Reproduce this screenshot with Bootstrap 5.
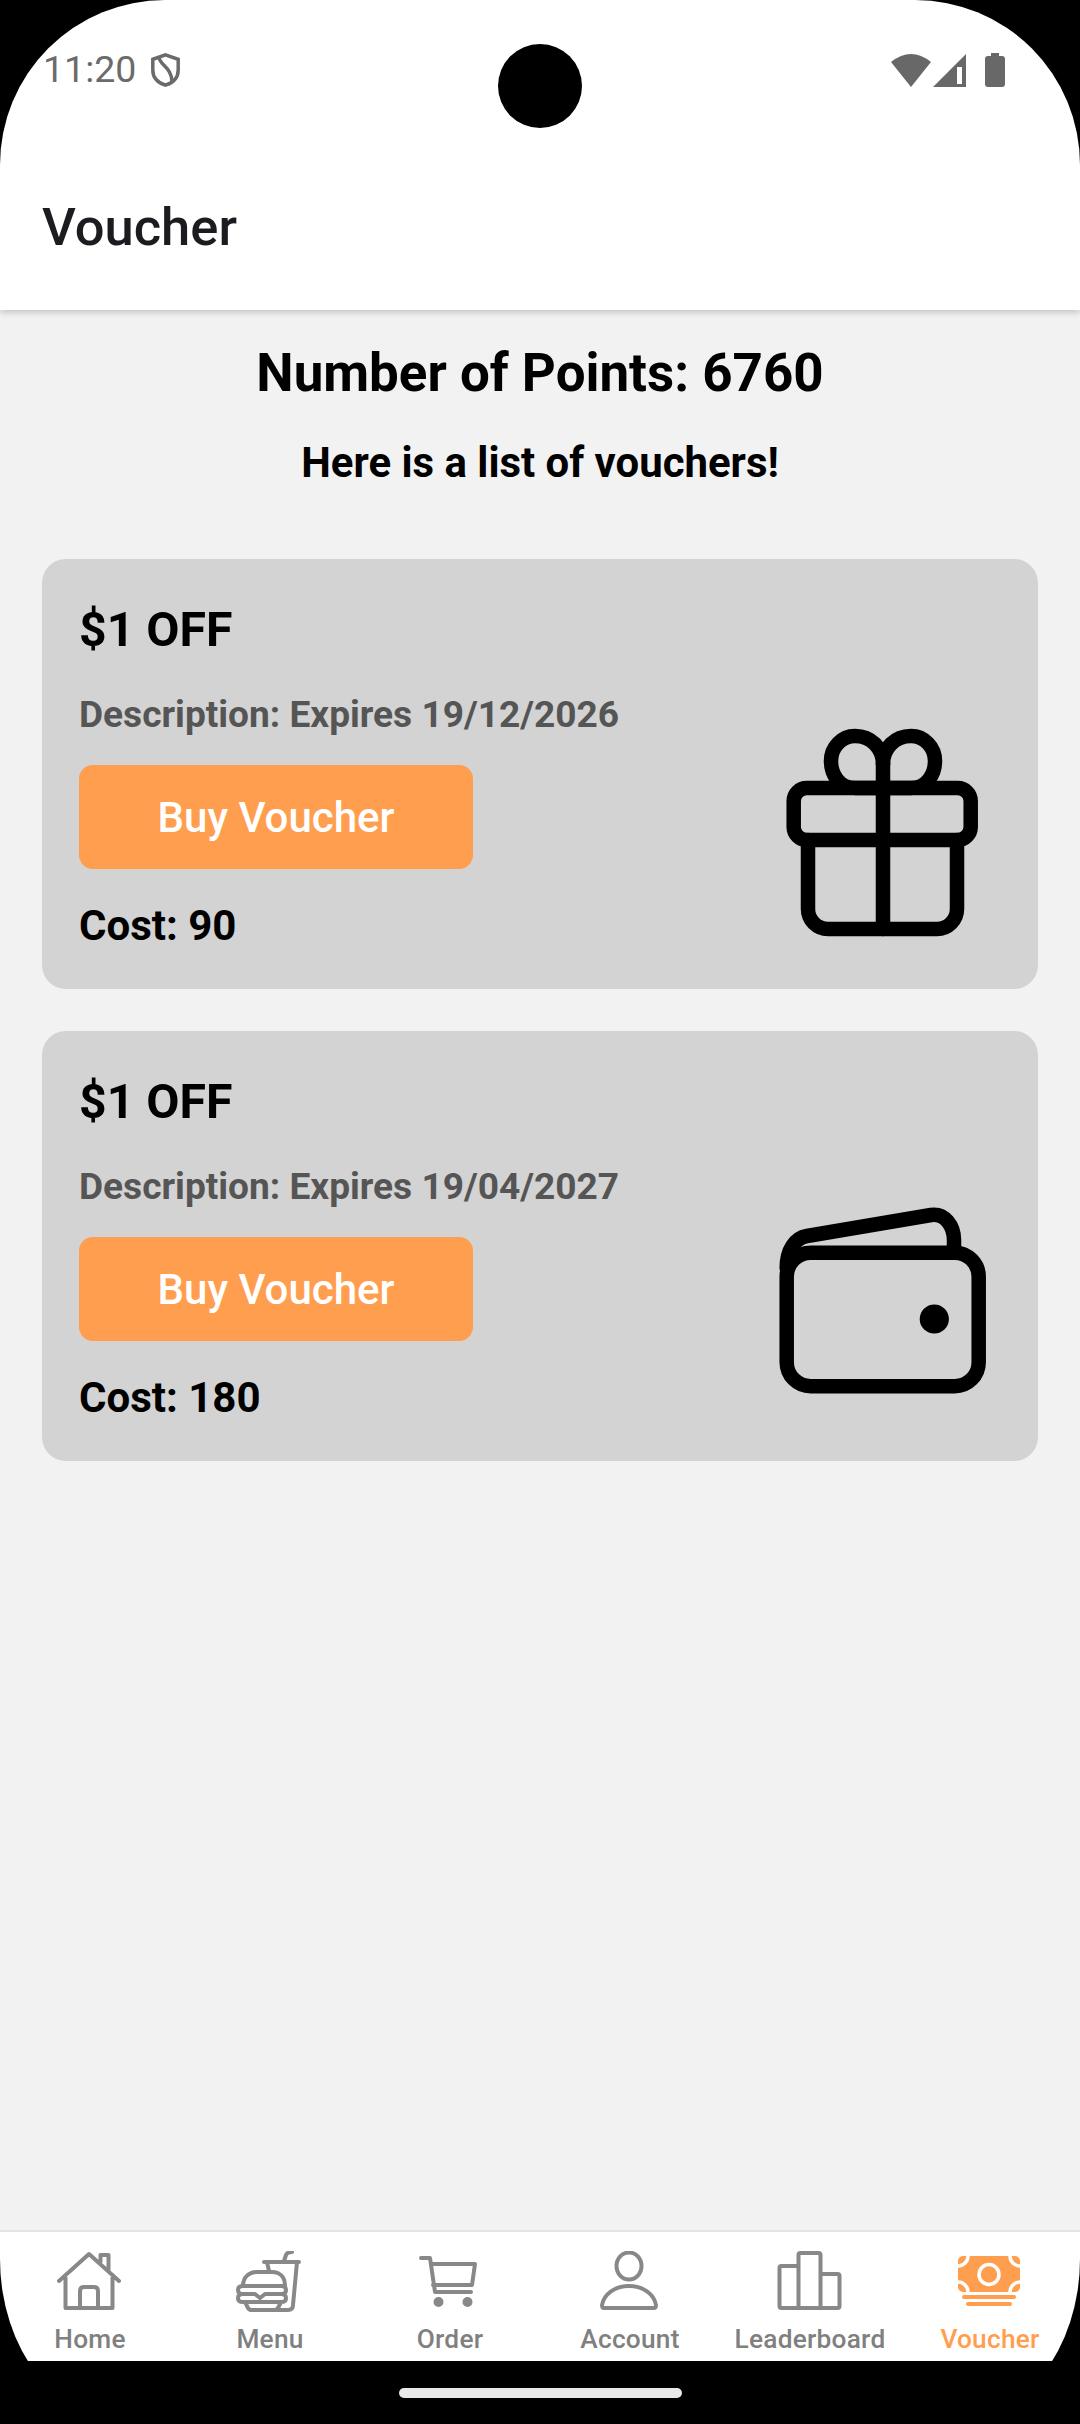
<!DOCTYPE html>
<html lang="en">
<head>
    <meta charset="UTF-8">
    <meta name="viewport" content="width=device-width, initial-scale=1.0">
    <title>Voucher</title>
    <link href="https://cdn.jsdelivr.net/npm/bootstrap@5.3.0/dist/css/bootstrap.min.css" rel="stylesheet">
    <style>
        html, body {
            margin: 0;
            background: #000;
        }

        body {
            font-family: Roboto, "Liberation Sans", sans-serif;
        }

        .phone-screen {
            width: 1080px;
            height: 2424px;
            background: #000;
            border-radius: 165px 165px 130px 130px / 165px;
            overflow: hidden;
            position: relative;
        }

        .camera-hole {
            position: absolute;
            left: 498px;
            top: 44px;
            width: 84px;
            height: 84px;
            border-radius: 50%;
            background: #000;
        }

        .app-header {
            background: #fff;
            height: 310px;
            box-shadow: 0 2px 7px rgba(0, 0, 0, .22);
            position: relative;
        }

        .status-row {
            height: 140px;
            padding: 0 75px 0 43px;
            color: #6b6b6b;
        }

        .status-time {
            font-size: 37.5px;
            line-height: 1;
            margin-right: 15px;
        }

        .signal-icon {
            margin-left: 2px;
        }

        .battery-icon {
            margin-left: 19px;
        }

        .app-title {
            font-size: 52.5px;
            font-weight: 500;
            line-height: 60px;
            color: #1c1b1f;
            margin: 57px 0 0 42px;
        }

        .page-body {
            background: #f2f2f2;
        }

        .points-title {
            font-size: 52.9px;
            font-weight: 700;
            line-height: 70px;
            color: #000;
            margin: 28px 0 0;
        }

        .list-title {
            font-size: 41.9px;
            font-weight: 700;
            line-height: 50px;
            color: #000;
            margin: 30px 0 71px;
        }

        .voucher-card {
            background: #d3d3d3;
            border-radius: 24px;
            margin: 0 42px 42px;
            height: 430px;
            padding: 37px 35px 0 37px;
        }

        .voucher-name {
            font-size: 48.2px;
            font-weight: 700;
            line-height: 68px;
            color: #000;
            margin: 0;
        }

        .voucher-desc {
            font-size: 37.1px;
            font-weight: 700;
            line-height: 48px;
            color: #555;
            margin: 27px 0 26px;
        }

        .buy-btn {
            display: block;
            width: 394px;
            height: 104px;
            background: #ff9e4f;
            border: 0;
            border-radius: 14px;
            color: #fff;
            font-size: 42px;
            font-weight: 500;
            line-height: 1;
            padding: 2px 0 0;
        }

        .voucher-cost {
            font-size: 42px;
            font-weight: 700;
            line-height: 48px;
            color: #000;
            margin: 33px 0 0;
        }

        .voucher-art {
            width: 240px;
            height: 240px;
            align-self: flex-end;
            margin-bottom: 37px;
        }

        .tab-strip {
            height: 131px;
            background: #fff;
            border-top: 2px solid #e4e4e4;
        }

        .tab-item {
            width: 180px;
            color: #808080;
            font-size: 26.25px;
            font-weight: 500;
            line-height: 30px;
            padding-top: 19px;
            letter-spacing: .25px;
        }

        .tab-item svg {
            display: block;
            margin: 0 auto 11px;
            width: 70px;
            height: 62px;
            fill: none;
            stroke: #888;
            stroke-width: 4;
            stroke-linecap: round;
            stroke-linejoin: round;
        }

        .tab-item.tab-active {
            color: #ff9e4f;
        }

        .tab-item.tab-active svg {
            stroke: none;
        }

        .gesture-zone {
            height: 63px;
            background: #000;
            padding-top: 27px;
        }

        .gesture-pill {
            width: 283px;
            height: 10px;
            border-radius: 5px;
            background: #e8e8e8;
        }
    </style>
</head>
<body>
    <div class="phone-screen d-flex flex-column">
        <header class="app-header flex-shrink-0">
            <div class="status-row d-flex align-items-center">
                <span class="status-time">11:20</span>
                <svg width="29" height="34" viewBox="0 0 29 34" fill="none" stroke="#6b6b6b" stroke-width="3.5">
                    <path d="M14.5 1.800l12.700 4.500v10.700c0 7.500-5 12.800-12.700 15.200C6.800 29.800 1.800 24.500 1.800 17V6.300z"/>
                    <path d="M8 4c0 8 13 10 13 25"/>
                </svg>
                <svg class="ms-auto" width="40" height="33" viewBox="0 0 40 33" fill="#686868">
                    <path d="M20 33L0 8Q20-8 40 8z"/>
                </svg>
                <svg class="signal-icon" width="33" height="33" viewBox="0 0 33 33" fill="#686868" fill-rule="evenodd">
                    <path d="M0 33L33 0v33zM24 13v17h5V13z"/>
                </svg>
                <svg class="battery-icon" width="20" height="34" viewBox="0 0 20 34" fill="#686868">
                    <path d="M6 0h8v3h3a3 3 0 0 1 3 3v25a3 3 0 0 1-3 3H3a3 3 0 0 1-3-3V6a3 3 0 0 1 3-3h3z"/>
                </svg>
            </div>
            <h1 class="app-title">Voucher</h1>
        </header>
        <div class="camera-hole"></div>

        <main class="page-body flex-grow-1">
            <h2 class="points-title text-center">Number of Points: 6760</h2>
            <h3 class="list-title text-center">Here is a list of vouchers!</h3>

            <div class="voucher-card d-flex justify-content-between">
                <div>
                    <h4 class="voucher-name">$1 OFF</h4>
                    <p class="voucher-desc">Description: Expires 19/12/2026</p>
                    <button type="button" class="btn buy-btn">Buy Voucher</button>
                    <p class="voucher-cost">Cost: 90</p>
                </div>
                <svg class="voucher-art" viewBox="0 0 240 240" fill="none" stroke="#000" stroke-width="14.500" stroke-linecap="round" stroke-linejoin="round">
                    <rect x="30.700" y="76" width="177" height="52" rx="13"/>
                    <path d="M45 128v69a20 20 0 0 0 20 20h109a20 20 0 0 0 20-20v-69"/>
                    <path d="M120 52v165"/>
                    <path d="M120 76H92C76 76 68 62 68 49 68 35 79 24 92 24c16 0 28 12 28 28"/>
                    <path d="M120 76h28c16 0 24-14 24-27 0-14-11-25-24-25-16 0-28 12-28 28"/>
                </svg>
            </div>

            <div class="voucher-card d-flex justify-content-between">
                <div>
                    <h4 class="voucher-name">$1 OFF</h4>
                    <p class="voucher-desc">Description: Expires 19/04/2027</p>
                    <button type="button" class="btn buy-btn">Buy Voucher</button>
                    <p class="voucher-cost">Cost: 180</p>
                </div>
                <svg class="voucher-art" viewBox="0 0 240 240" fill="none" stroke="#000" stroke-width="14.500" stroke-linecap="round" stroke-linejoin="round">
                    <rect x="23.700" y="68.700" width="192" height="133.500" rx="24"/>
                    <path d="M23.700 84C23.700 66 32 54 44 52L168 31c14-2 23 11 23 25v12"/>
                    <circle cx="171.300" cy="135" r="14.600" fill="#000" stroke="none"/>
                </svg>
            </div>
        </main>

        <nav class="tab-strip d-flex flex-shrink-0">
            <div class="tab-item text-center">
                <svg viewBox="55 2252 70 62">
                    <path d="M59 2282l30-27 30 27M65.500 2276v33h47v-33M80 2309v-17q0-4 4-4h10q4 0 4 4v17M100.500 2263v-7h8v16"/>
                </svg>
                Home
            </div>
            <div class="tab-item text-center">
                <svg viewBox="235 2252 70 62">
                    <path d="M264 2263h35M297 2263l-4 43q0 5-5 5h-11M267 2263l2 9M284 2262l2-6q1-3 6-3"/>
                    <path d="M243 2287c0-9 6-14 14-14h15c8 0 13 5 13 14zM243 2287q-5 0-5 4t5 4h12l5 4 5-4h16q5 0 5-4t-5-4M243 2295q-5 0-5 4t5 4h38q5 0 5-4t-5-4M245 2303l3 6q1 2 4 2h22q3 0 4-2l3-6"/>
                </svg>
                Menu
            </div>
            <div class="tab-item text-center">
                <svg viewBox="415 2252 70 62">
                    <path d="M421 2259h9l5 34h36M431 2265h44l-3 21h-39"/>
                    <circle cx="438.500" cy="2303" r="3" fill="#888"/>
                    <circle cx="467.500" cy="2303" r="3" fill="#888"/>
                </svg>
                Order
            </div>
            <div class="tab-item text-center">
                <svg viewBox="595 2252 70 62">
                    <ellipse cx="629" cy="2267" rx="12.500" ry="13.500"/>
                    <path d="M604 2309q-2 0-2-3c2-11 13-19 27-19s25 8 27 19q0 3-2 3z"/>
                </svg>
                Account
            </div>
            <div class="tab-item text-center">
                <svg viewBox="775 2252 70 62">
                    <path d="M798.500 2267h-17q-2 0-2 2v38q0 2 2 2h56q2 0 2-2v-30q0-2-2-2h-17M798.500 2309v-53q0-2 2-2h18q2 0 2 2v53"/>
                </svg>
                Leaderboard
            </div>
            <div class="tab-item tab-active text-center">
                <svg viewBox="955 2252 70 62">
                    <rect x="958" y="2257" width="62" height="36" rx="5" fill="#ff9e4f"/>
                    <g fill="none" stroke="#fff" stroke-width="3.500">
                        <circle cx="958" cy="2257" r="10"/>
                        <circle cx="1020" cy="2257" r="10"/>
                        <circle cx="958" cy="2293" r="10"/>
                        <circle cx="1020" cy="2293" r="10"/>
                    </g>
                    <circle cx="989" cy="2275.500" r="10" fill="#ff9e4f" stroke="#fff" stroke-width="3.500"/>
                    <rect x="962" y="2296" width="54" height="4" rx="2" fill="#ff9e4f"/>
                    <rect x="966" y="2303" width="46" height="4" rx="2" fill="#ff9e4f"/>
                </svg>
                Voucher
            </div>
        </nav>
        <div class="gesture-zone flex-shrink-0">
            <div class="gesture-pill mx-auto"></div>
        </div>
    </div>

    <script src="https://cdn.jsdelivr.net/npm/bootstrap@5.3.0/dist/js/bootstrap.bundle.min.js"></script>
</body>
</html>
